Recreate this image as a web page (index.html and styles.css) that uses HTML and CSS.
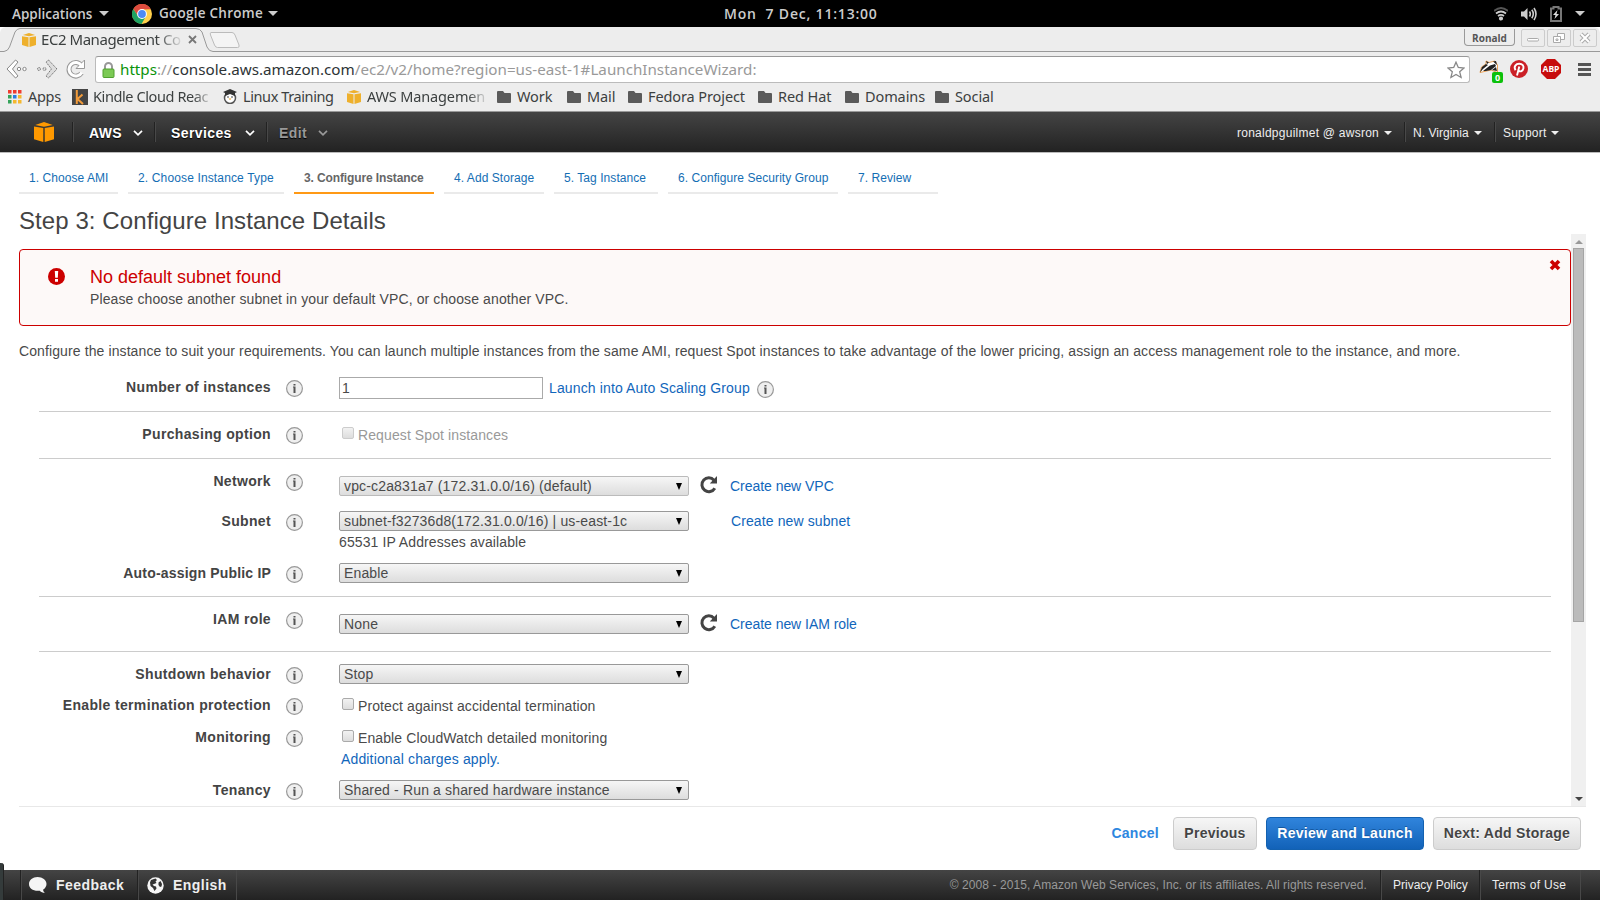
FILE: index.html
```
<!DOCTYPE html>
<html lang="en">
<head>
    <meta charset="utf-8">
    <title>EC2 Management Console</title>
    <link rel="stylesheet" href="styles.css">
</head>
<body>
    <svg class="defs" xmlns="http://www.w3.org/2000/svg">
        <symbol id="cube" viewBox="0 0 20 20">
            <path d="M0 4.6 9.3 6v13.9L0 17.2zM20 4.6 10.7 6v13.9L20 17.2zM10 0l8.8 2.9L10 4.8 1.2 2.9z"/>
        </symbol>
        <symbol id="folder" viewBox="0 0 14 12">
            <path d="M1 0h5l1.500 2H13q1 0 1 1v8q0 1-1 1H1q-1 0-1-1V1q0-1 1-1z"/>
        </symbol>
        <symbol id="info" viewBox="0 0 17 17">
            <circle cx="8.500" cy="8.500" r="7.900" fill="#efefef" stroke="#999" stroke-width="1.200"/>
            <path d="M7 6.500h2.500V13H7.500V7.500H7zM7.500 4h2v1.500h-2z" fill="#555"/>
        </symbol>
        <symbol id="chevron" viewBox="0 0 10 6">
            <path d="M1 .8l4 4 4-4" fill="none" stroke="currentColor" stroke-width="1.700"/>
        </symbol>
        <symbol id="reload" viewBox="0 0 18 18">
            <path d="M14.800 12.200A6.900 6.900 0 1 1 14 4.200" fill="none" stroke="#444" stroke-width="3"/>
            <path d="M17 0v7.500H9.800z" fill="#444"/>
        </symbol>
    </svg>

    <header class="desktop-bar">
        <span class="desk-apps">Applications</span><i class="down"></i>
        <svg class="chrome-logo" viewBox="0 0 20 20">
            <circle cx="10" cy="10" r="10" fill="#ffd04b"/>
            <path d="M1.300 5A10 10 0 0 1 18.800 5.200L10 5.500 6 12z" fill="#dd4b3e"/>
            <path d="M1.300 5A10 10 0 0 0 9.500 20l4.300-7.500L6 12z" fill="#1da362"/>
            <circle cx="10" cy="10" r="4.900" fill="#fff"/>
            <circle cx="10" cy="10" r="3.900" fill="#4c8bf5"/>
        </svg>
        <span class="desk-chrome">Google Chrome</span><i class="down"></i>
        <span class="clock">Mon&nbsp; 7 Dec, 11:13:00</span>
        <div class="tray">
            <svg width="14" height="14" viewBox="0 0 14 14" fill="none" stroke="#ccc" stroke-width="1.800">
                <path d="M0 4q7-6 14 0" stroke="#555"/><path d="M2 6.500q5-4 10 0M4 9q3-2.200 6 0"/><circle cx="7" cy="11.500" r="1.200" fill="#ccc"/>
            </svg>
            <svg width="16" height="14" viewBox="0 0 16 14" fill="none" stroke="#ccc" stroke-width="1.600">
                <path d="M0 4.500h3L6.500 1v12L3 9.500H0z" fill="#ccc" stroke="none"/><path d="M8.500 4.500q1.600 2.500 0 5M10.800 2.800q3 4.200 0 8.400M13 1q4 6 0 12"/>
            </svg>
            <svg width="12" height="16" viewBox="0 0 12 16">
                <path d="M1 2.500h2.500V1h5v1.500H11V15H1z" fill="none" stroke="#777" stroke-width="2"/><path d="M7.500 4 3 9h2.500L4.500 13 9 8H6.500z" fill="#ddd"/>
            </svg>
            <i class="down"></i>
        </div>
    </header>

    <div class="browser">
        <div class="tab-strip">
            <svg class="tab-shape" width="240" height="25" viewBox="0 0 240 25">
                <path d="M0 24.500H4Q8 24 9.500 20L15 5Q17 1.500 20 1.500H196Q200 1.500 202 5L207 20Q209 24.500 213 24.500H240" fill="#ededed" stroke="#999"/>
                <path d="M211 5.500h21q2 0 3 2.500l4 10q.8 2.500-1.500 2.500h-20q-2 0-3-2.500l-4-10q-.8-2.500.5-2.500z" fill="#f4f4f4" stroke="#bbb"/>
            </svg>
            <div class="tab-label">
                <svg class="fav" fill="#eeb02c"><use href="#cube"/></svg>
                <span>EC2 Management Co</span>
                <svg class="close" width="9" height="9" viewBox="0 0 9 9"><path d="M1 1l7 7M8 1 1 8" stroke="#777" stroke-width="1.800"/></svg>
            </div>
            <div class="window-buttons">
                <span class="user">Ronald</span>
                <span class="wb"><svg width="14" height="12" viewBox="0 0 14 12"><rect x="1.500" y="6.500" width="11" height="2.500" rx="1" fill="#fff" stroke="#aaa"/></svg></span>
                <span class="wb"><svg width="14" height="12" viewBox="0 0 14 12" fill="#fff" stroke="#aaa"><path d="M5.500 1.500h7v6h-7z"/><path d="M1.500 4.500h7v6h-7zM4 7h2v1.500H4z"/></svg></span>
                <span class="wb"><svg width="14" height="12" viewBox="0 0 14 12"><path d="M3 2l8 8M11 2 3 10" stroke="#aaa" stroke-width="4"/><path d="M3 2l8 8M11 2 3 10" stroke="#fff" stroke-width="2"/></svg></span>
            </div>
        </div>
        <div class="toolbar">
            <svg class="nav-icon" width="22" height="20" viewBox="0 0 22 20" fill="#fff" stroke="#888"><path d="M9.500 1 1 10l8.500 9 2.500-2-5.500-7L12 3z"/><circle cx="13" cy="10" r="1.700"/><circle cx="18.500" cy="10" r="1.700"/></svg>
            <svg class="nav-icon" width="22" height="20" viewBox="0 0 22 20" fill="#ddd" stroke="#777" stroke-dasharray="1.500 .7"><path d="M12.500 1 21 10l-8.500 9-2.500-2 5.500-7L10 3z"/><circle cx="3" cy="10" r="1.500"/><circle cx="8.500" cy="10" r="1.500"/></svg>
            <svg class="nav-icon" width="21" height="21" viewBox="0 0 21 21"><path d="M15.500 14A6.800 6.800 0 1 1 15 6" fill="none" stroke="#999" stroke-width="5"/><path d="M18.500 1v8.500h-8.500z" fill="#fff" stroke="#999"/><path d="M15.800 13.500A6.800 6.800 0 1 1 15.500 6.500" fill="none" stroke="#fff" stroke-width="3"/></svg>
            <div class="omnibox">
                <svg width="13" height="16" viewBox="0 0 13 16"><path d="M3 8V4.500a3.500 3.500 0 0 1 7 0V8" fill="none" stroke="#999" stroke-width="2"/><rect x="1" y="7" width="11" height="8.500" rx="1" fill="#7cca55" stroke="#50a030"/></svg>
                <span class="url"><b>https</b>://<em>console.aws.amazon.com</em>/ec2/v2/home?region=us-east-1#LaunchInstanceWizard:</span>
                <svg class="star" width="18" height="18" viewBox="0 0 18 18"><path d="M9 1.200l2.300 5.300 5.700.5-4.300 3.800 1.400 5.700L9 13.500 3.900 16.500l1.400-5.700L1 7l5.700-.5z" fill="#fff" stroke="#888" stroke-width="1.300"/></svg>
            </div>
            <div class="extensions">
                <div class="badger">
                    <svg width="20" height="16" viewBox="0 0 20 16"><path d="M1 13.500 2.500 8 7 5V2l3 1.500L16 2l2.500 4v7.500L12 11z" fill="#fff" stroke="#e58a2e" stroke-width=".8"/><path d="M1 13.500 3 8l4-3 2 1-5 4zM4 12l7-5.500 5-1.500 1 2-5 4-5 1zM7 2l3 1.500L8 5zM14 2.500l3-.5 1 4zM13 11l4-3 1 4z" fill="#222"/></svg>
                    <span class="badge">0</span>
                </div>
                <svg width="18" height="18" viewBox="0 0 18 18"><circle cx="9" cy="9" r="9" fill="#cb2027"/><path d="M7 15.500 9.300 6.500M5.500 10.200C3.300 6.500 6 3.800 9.200 3.800c3.300 0 4.800 2.200 4.200 4.700-.6 3-3.700 3.700-4.900 1.900" fill="none" stroke="#fff" stroke-width="1.900"/></svg>
                <span class="abp">ABP</span>
                <span class="menu"></span>
            </div>
        </div>
        <nav class="bookmarks">
            <svg class="apps" width="14" height="14" viewBox="0 0 14 14"><path d="M0 0h3.500v3.500H0zM5 0h3.500v3.500H5zM10 0h3.500v3.500H10z" fill="#f03c2e"/><path d="M0 5h3.500v3.500H0zM0 10h3.500v3.500H0z" fill="#35a35a"/><path d="M5 5h3.500v3.500H5z" fill="#2a7de1"/><path d="M10 5h3.500v3.500H10zM5 10h3.500v3.500H5zM10 10h3.500v3.500H10z" fill="#f5b82e"/></svg>
            <a class="bk-apps">Apps</a>
            <svg class="kindle" width="16" height="16" viewBox="0 0 16 16"><path d="M0 0h16v16H0z" fill="#444"/><path d="M4.800 1v14M10.500 5.500 5.500 10l5.500 5" fill="none" stroke="#f29b3a" stroke-width="2"/></svg>
            <a class="bk-kindle fade">Kindle Cloud Reac</a>
            <svg class="tux" width="14" height="15" viewBox="0 0 14 15"><circle cx="7" cy="9" r="5.500" fill="#fff" stroke="#555" stroke-width="1.500"/><path d="M0 3 7 0l7 3-2 1v3L7 5 2 7V4z" fill="#333"/><circle cx="5" cy="8" r=".7"/><circle cx="9" cy="8" r=".7"/><path d="M5.500 9.500h3L7 11z" fill="#eba420"/></svg>
            <a class="bk-linux">Linux Training</a>
            <svg class="fav" fill="#eeb02c"><use href="#cube"/></svg>
            <a class="bk-aws fade">AWS Managemen</a>
            <svg class="folder"><use href="#folder"/></svg><a class="bk-work">Work</a>
            <svg class="folder"><use href="#folder"/></svg><a class="bk-mail">Mail</a>
            <svg class="folder"><use href="#folder"/></svg><a class="bk-fedora">Fedora Project</a>
            <svg class="folder"><use href="#folder"/></svg><a class="bk-redhat">Red Hat</a>
            <svg class="folder"><use href="#folder"/></svg><a class="bk-domains">Domains</a>
            <svg class="folder"><use href="#folder"/></svg><a>Social</a>
        </nav>
    </div>

    <nav class="aws-nav">
        <svg class="aws-logo"><use href="#cube"/></svg>
        <div class="nav-item nav-aws">AWS <svg class="chev"><use href="#chevron"/></svg></div>
        <div class="nav-item nav-services">Services <svg class="chev"><use href="#chevron"/></svg></div>
        <div class="nav-item nav-edit">Edit <svg class="chev"><use href="#chevron"/></svg></div>
        <div class="account">
            <div class="acc acc-user">ronaldpguilmet @ awsron <i class="down"></i></div>
            <div class="acc acc-region">N. Virginia <i class="down"></i></div>
            <div class="acc acc-support">Support <i class="down"></i></div>
        </div>
    </nav>

    <main>
        <ol class="steps">
            <li class="s1">1. Choose AMI</li>
            <li class="s2">2. Choose Instance Type</li>
            <li class="s3 active">3. Configure Instance</li>
            <li class="s4">4. Add Storage</li>
            <li class="s5">5. Tag Instance</li>
            <li class="s6">6. Configure Security Group</li>
            <li class="s7">7. Review</li>
        </ol>
        <h1>Step 3: Configure Instance Details</h1>

        <div class="scroller">
            <div class="content">
                <div class="alert">
                    <svg class="alert-icon" width="17" height="17" viewBox="0 0 17 17"><circle cx="8.500" cy="8.500" r="8.500" fill="#c00"/><path d="M6.800 3h3.400l-.4 6.800H7.200zM7 11h3v2.800H7z" fill="#fff"/></svg>
                    <div class="alert-text">
                        <h2>No default subnet found</h2>
                        <p>Please choose another subnet in your default VPC, or choose another VPC.</p>
                    </div>
                    <svg class="dismiss" width="12" height="12" viewBox="0 0 12 12"><path d="M2 2l8 8M10 2l-8 8" stroke="#c00" stroke-width="3.600"/></svg>
                </div>
                <p class="intro">Configure the instance to suit your requirements. You can launch multiple instances from the same AMI, request Spot instances to take advantage of the lower pricing, assign an access management role to the instance, and more.</p>

                <section>
                    <div class="row r46">
                        <label>Number of instances</label><svg class="info"><use href="#info"/></svg>
                        <div class="control"><span class="input">1</span><a class="asg">Launch into Auto Scaling Group</a><svg class="info info-inline"><use href="#info"/></svg></div>
                    </div>
                </section>
                <section>
                    <div class="row r46">
                        <label>Purchasing option</label><svg class="info"><use href="#info"/></svg>
                        <div class="control check disabled"><i class="box"></i><span>Request Spot instances</span></div>
                    </div>
                </section>
                <section>
                    <div class="row r40">
                        <label>Network</label><svg class="info"><use href="#info"/></svg>
                        <div class="control low"><span class="select light">vpc-c2a831a7 (172.31.0.0/16) (default)</span><svg class="reload"><use href="#reload"/></svg><a class="new-link">Create new VPC</a></div>
                    </div>
                    <div class="row r52">
                        <label>Subnet</label><svg class="info"><use href="#info"/></svg>
                        <div class="control"><span class="select">subnet-f32736d8(172.31.0.0/16) | us-east-1c</span><a class="new-subnet">Create new subnet</a><span class="note">65531 IP Addresses available</span></div>
                    </div>
                    <div class="row r45">
                        <label class="tight">Auto-assign Public IP</label><svg class="info"><use href="#info"/></svg>
                        <div class="control"><span class="select">Enable</span></div>
                    </div>
                </section>
                <section>
                    <div class="row r54">
                        <label>IAM role</label><svg class="info"><use href="#info"/></svg>
                        <div class="control low"><span class="select">None</span><svg class="reload"><use href="#reload"/></svg><a class="new-link">Create new IAM role</a></div>
                    </div>
                </section>
                <section>
                    <div class="row r31">
                        <label>Shutdown behavior</label><svg class="info"><use href="#info"/></svg>
                        <div class="control"><span class="select">Stop</span></div>
                    </div>
                    <div class="row r32">
                        <label>Enable termination protection</label><svg class="info"><use href="#info"/></svg>
                        <div class="control check"><i class="box"></i><span>Protect against accidental termination</span></div>
                    </div>
                    <div class="row r53">
                        <label>Monitoring</label><svg class="info"><use href="#info"/></svg>
                        <div class="control check"><i class="box"></i><span>Enable CloudWatch detailed monitoring</span><a class="note">Additional charges apply.</a></div>
                    </div>
                    <div class="row">
                        <label>Tenancy</label><svg class="info"><use href="#info"/></svg>
                        <div class="control"><span class="select">Shared - Run a shared hardware instance</span></div>
                    </div>
                </section>
            </div>
            <div class="scrollbar"><i class="up"></i><span class="thumb"></span><i class="down"></i></div>
        </div>

        <div class="actions">
            <a class="cancel">Cancel</a>
            <span class="btn previous">Previous</span>
            <span class="btn primary">Review and Launch</span>
            <span class="btn next">Next: Add Storage</span>
        </div>
    </main>

    <footer>
        <div class="corner"></div>
        <div class="foot feedback"><svg width="18" height="16" viewBox="0 0 18 16"><path d="M8.500 0C13.500 0 17.500 3 17.500 7c0 2.500-1.500 4.500-3.500 5.700.2 1.200.8 2.200 1.800 3.100-2 0-3.800-.8-5-2.100C4.500 14.500 0 11.500 0 7c0-4 3.800-7 8.500-7z" fill="#f5f5f5"/></svg>Feedback</div>
        <div class="foot english"><svg width="17" height="17" viewBox="0 0 17 17"><circle cx="8.500" cy="8.500" r="8.200" fill="#f5f5f5"/><path d="M4 3 8.500 1.500 10 3 8.500 4.500l1 1.500L7 7l-1.500.5L7 9l2 .5.500 2-2 2.500L6 11 3.500 9 3 5.500zM11.500 5.500l2-1.500 1.500 3-.5 2.500-1.500.5-1.500-2z" fill="#333"/></svg>English</div>
        <div class="copyright">© 2008 - 2015, Amazon Web Services, Inc. or its affiliates. All rights reserved.</div>
        <div class="foot privacy">Privacy Policy</div>
        <div class="foot terms">Terms of Use</div>
    </footer>
</body>
</html>
```

FILE: styles.css
```
* { box-sizing: border-box; margin: 0; padding: 0; }
body {
    width: 1600px;
    height: 900px;
    overflow: hidden;
    display: flex;
    flex-direction: column;
    background: #fff;
    color: #4a4a4a;
    font: 14px/16px "Liberation Sans", Arial, sans-serif;
    white-space: nowrap;
}
svg { display: block; flex: none; }
.defs { display: none; }
i.down { display: block; flex: none; width: 0; height: 0; border: 5px solid transparent; border-top-color: #ccc; border-bottom: 0; }

/* desktop bar */
.desktop-bar {
    height: 27px;
    flex: none;
    display: flex;
    align-items: center;
    background: #000;
    color: #ccc;
    font: 600 14px/27px "Open Sans", "Noto Sans", sans-serif;
}
.desk-apps { width: 81px; margin-left: 12px; margin-right: 6px; padding-top: 1px; font-size: 13.5px; }
.chrome-logo { width: 20px; height: 20px; margin-left: 23px; margin-right: 7px; }
.desk-chrome { width: 103px; margin-right: 6px; font-size: 13.5px; letter-spacing: .25px; }
.clock { margin-left: 446px; letter-spacing: .8px; }
.tray { margin-left: auto; margin-right: 15px; display: flex; align-items: center; gap: 13px; }

/* browser */
.browser { height: 85px; flex: none; background: #ededed; border-bottom: 1px solid #999; color: #3c4040; font: 15px/20px "Noto Sans", "Open Sans", sans-serif; border-radius: 6px 6px 0 0; }
.tab-strip { position: relative; height: 25px; display: flex; align-items: center; background: linear-gradient(#999, #999) 240px 24px / 1400px 1px no-repeat; }
.tab-shape { position: absolute; left: 0; top: 0; }
.tab-label { position: relative; display: flex; align-items: center; margin-left: 22px; width: 175px; }
.tab-label span { width: 141px; margin-left: 5px; margin-top: -2px; overflow: hidden; letter-spacing: -.45px; -webkit-mask-image: linear-gradient(90deg, #000 116px, transparent 143px); }
.tab-label .close { margin-left: auto; }
.fav { width: 14px; height: 14px; }
.window-buttons { display: flex; align-items: flex-start; gap: 2px; margin-left: auto; margin-right: 3px; height: 22px; }
.user { width: 51px; height: 17px; margin-right: 4px; border: 1px solid #999; border-top: 0; border-radius: 0 0 4px 4px; text-align: center; font: bold 10px/18px "Open Sans", sans-serif; color: #555; }
.wb { width: 24px; height: 18px; display: flex; align-items: center; justify-content: center; border: 1px solid #ccc; border-radius: 2px; }
.toolbar { height: 34px; display: flex; align-items: center; padding-left: 6px; }
.nav-icon { margin-right: 8px; }
.omnibox { width: 1375px; height: 27px; margin-top: 1px; display: flex; align-items: center; padding: 0 4px 0 6px; background: #fff; border: 1px solid #bbb; border-top-color: #999; border-radius: 3px; }
.url { margin-left: 5px; margin-top: -2px; color: #999; font-size: 15.2px; }
.url b { font-weight: normal; color: #0a930a; }
.url em { font-style: normal; color: #2e3436; }
.star { margin-left: auto; }
.extensions { display: flex; align-items: center; margin-left: 9px; }
.badger { position: relative; width: 24px; height: 20px; margin-right: 7px; }
.badge { position: absolute; right: 0; bottom: -4px; width: 11px; height: 11px; border-radius: 2px; background: #0bc10b; color: #fff; font: bold 9px/11px "Open Sans", sans-serif; text-align: center; }
.abp { width: 20px; height: 20px; margin: 0 17px 0 13px; background: #c70d0d; clip-path: polygon(30% 0, 70% 0, 100% 30%, 100% 70%, 70% 100%, 30% 100%, 0 70%, 0 30%); color: #fff; font: bold 8.5px/20px "Open Sans", sans-serif; text-align: center; }
.menu { width: 13px; height: 13px; border-top: 3px solid #555; border-bottom: 3px solid #555; background: linear-gradient(#555, #555) 0 2px / 13px 3px no-repeat; }
.bookmarks { height: 25px; margin-top: -2px; display: flex; align-items: center; padding-left: 8px; font-size: 14.5px; letter-spacing: -.1px; }
.bookmarks a { margin-top: -1px; }
.bookmarks .folder { width: 14px; height: 12px; margin-right: 6px; fill: #5a5a5a; }
.fade { overflow: hidden; -webkit-mask-image: linear-gradient(90deg, #000 85%, transparent 102%); }
.bk-apps { width: 44px; margin-left: 6px; letter-spacing: -.3px; }
.bk-kindle { width: 118px; margin-left: 5px; margin-right: 12px; letter-spacing: -.4px; }
.bk-linux { width: 98px; margin-left: 6px; letter-spacing: -.4px; }
.bookmarks .fav { margin-left: 6px; }
.bk-aws { width: 119px; margin-left: 6px; margin-right: 11px; letter-spacing: -.15px; }
.bk-work { width: 50px; }
.bk-mail { width: 41px; }
.bk-fedora { width: 110px; }
.bk-redhat { width: 67px; }
.bk-domains { width: 70px; }

/* aws navigation */
.aws-nav { height: 41px; flex: none; display: flex; align-items: center; background: linear-gradient(#444, #222); border-bottom: 1px solid #bbb; color: #fff; }
.aws-logo { width: 20px; height: 20px; margin-left: 34px; margin-right: 18px; fill: #f90; }
.nav-item { height: 20px; display: flex; align-items: center; justify-content: space-between; padding: 2px 11px 0 16px; border-left: 1px solid #222; box-shadow: inset 1px 0 #484848; font-weight: bold; letter-spacing: .4px; text-shadow: 0 1px 1px #000; }
.nav-aws { width: 82px; }
.nav-services { width: 112px; }
.nav-edit { width: 73px; padding-left: 12px; color: #999; }
.chev { width: 10px; height: 6px; }
.account { display: flex; margin-left: auto; margin-right: 33px; }
.acc { height: 20px; display: flex; align-items: center; justify-content: space-between; padding: 1px 8px 0; border-left: 1px solid #222; box-shadow: inset 1px 0 #484848; color: #eee; font-size: 12px; }
.acc .down { border-width: 4px; border-bottom: 0; border-top-color: #eee; }
.acc-user { width: 175px; border: 0; box-shadow: none; letter-spacing: .25px; padding-right: 12px; }
.acc-region { width: 90px; padding-right: 12px; letter-spacing: .05px; }
.acc-support { width: 73px; letter-spacing: .2px; }

/* wizard */
main { height: 717px; flex: none; padding-left: 19px; }
.steps { display: flex; gap: 10px; height: 41px; list-style: none; font-size: 12px; letter-spacing: .06px; }
.steps li { padding: 17px 0 0 10px; color: #146eb4; border-bottom: 2px solid #eaeaea; }
.steps .active { color: #666; font-weight: bold; letter-spacing: -.12px; border-color: #ff9915; }
.steps .s2 { letter-spacing: .14px; }
.s1 { width: 99px; }
.s2 { width: 156px; }
.s3 { width: 140px; }
.s4 { width: 100px; }
.s5 { width: 104px; }
.s6 { width: 170px; }
.s7 { width: 90px; }
h1 { height: 40px; color: #444; font-size: 24px; line-height: 54px; font-weight: normal; letter-spacing: .08px; }
.scroller { width: 1567px; height: 573px; display: flex; border-bottom: 1px solid #e8e8e8; overflow: hidden; }
.content { width: 1552px; padding-top: 15px; letter-spacing: .105px; }
.alert { height: 77px; display: flex; padding: 17px 9px 0 28px; border: 1px solid #c00; border-radius: 4px; background: #fdf9f8; }
.alert-icon { margin-top: 1px; }
.alert-text { margin-left: 25px; }
.alert h2 { color: #c00; font-size: 18px; line-height: 20px; font-weight: normal; letter-spacing: 0; }
.alert p { line-height: 24px; }
.dismiss { margin: -8px 0 0 auto; }
.intro { height: 39px; line-height: 50px; }

/* form rows */
section { width: 1512px; margin-left: 20px; border-bottom: 1px solid #ccc; }
section:last-child { border: 0; }
.row { display: flex; align-items: flex-start; }
.r31 { height: 31px; }
.r32 { height: 32px; }
.r40 { height: 40px; }
.r45 { height: 45px; }
.r46 { height: 46px; }
.r52 { height: 52px; }
.r53 { height: 53px; }
.r54 { height: 54px; }
label { width: 232px; padding-top: 14px; color: #444; text-align: right; font-weight: bold; letter-spacing: .34px; }
label.tight { letter-spacing: .18px; }
.info { width: 17px; height: 17px; margin: 15px 0 0 15px; }
.control { display: flex; flex-wrap: wrap; width: 700px; margin-left: 36px; padding-top: 12px; line-height: 20px; }
.control.low { padding-top: 17px; }
.control a { color: #1166bb; }
.control .new-link { letter-spacing: -.04px; }
.input { width: 204px; height: 22px; padding-left: 2px; border: 1px solid #aaa; }
.asg { margin-left: 6px; padding-top: 1px; letter-spacing: .13px; }
.info-inline { margin: 4px 0 0 7px; }
.select { position: relative; width: 350px; height: 20px; padding-left: 4px; border: 1px solid #999; border-radius: 2px; background: linear-gradient(#f6f6f6, #ddd); line-height: 19px; letter-spacing: .15px; }
.select::after { content: ""; position: absolute; right: 6px; top: 6px; border: 3.5px solid transparent; border-top: 7px solid #000; border-bottom: 0; }
.select.light { border-color: #bbb; }
.reload { width: 18px; height: 18px; margin: 0 12px 0 11px; }
.new-subnet { margin-left: 42px; }
.note { width: 100%; line-height: 23px; }
.check { line-height: 20px; }
.box { width: 12px; height: 12px; margin: 3px 4px 0 3px; border: 1px solid #aaa; border-radius: 2px; background: linear-gradient(#f2f2f2, #ddd); }
.check span { padding-top: 1px; }
.check .note { padding-left: 2px; letter-spacing: .15px; }
.disabled { color: #999; }
.disabled .box { border-color: #ccc; }

.scrollbar { width: 15px; height: 573px; display: flex; flex-direction: column; align-items: center; background: #f0f0f0; }
.scrollbar .up { margin-top: 6px; border: 4px solid transparent; border-bottom-color: #999; border-top: 0; }
.scrollbar .thumb { width: 11px; height: 374px; margin-top: 4px; background: #bbb; border: 1px solid #a5a5a5; }
.scrollbar .down { margin: auto 0 6px; border-width: 4px; border-bottom: 0; border-top-color: #444; }

.actions { display: flex; justify-content: flex-end; padding: 10px 19px 0 0; color: #444; font-weight: bold; letter-spacing: .28px; line-height: 31px; }
.cancel { margin-right: 14px; padding-top: 1px; color: #2e87df; }
.btn { height: 33px; margin-left: 9px; border: 1px solid #ccc; border-radius: 4px; background: linear-gradient(#f6f6f6, #ddd); text-align: center; text-shadow: 0 1px #fff; }
.previous { width: 84px; margin-left: 0; }
.primary { width: 158px; color: #fff; border-color: #1361b0; background: linear-gradient(#3084dc, #1262b8); text-shadow: 0 -1px #1458a0; }
.next { width: 148px; }

footer { height: 30px; flex: none; display: flex; line-height: 30px; background: linear-gradient(#444, #222); color: #eee; font-size: 12px; }
.corner { width: 4px; height: 37px; margin-top: -7px; margin-right: 16px; background: #343b3b; border-right: 1px solid #222; border-radius: 0 3px 0 0; }
.foot { display: flex; align-items: center; border-left: 1px solid #222; box-shadow: inset 1px 0 #484848; }
.feedback, .english { font-size: 14px; font-weight: bold; letter-spacing: .45px; }
.feedback { width: 117px; padding-left: 8px; }
.feedback svg { margin-right: 9px; }
.english { width: 100px; padding-left: 9px; border-right: 1px solid #484848; }
.english svg { margin-right: 9px; }
.copyright { margin-left: auto; margin-right: 13px; color: #999; letter-spacing: .075px; }
.privacy { width: 99px; padding-left: 12px; }
.terms { width: 102px; padding-left: 12px; border-right: 1px solid #484848; margin-right: 19px; letter-spacing: .3px; }
```
